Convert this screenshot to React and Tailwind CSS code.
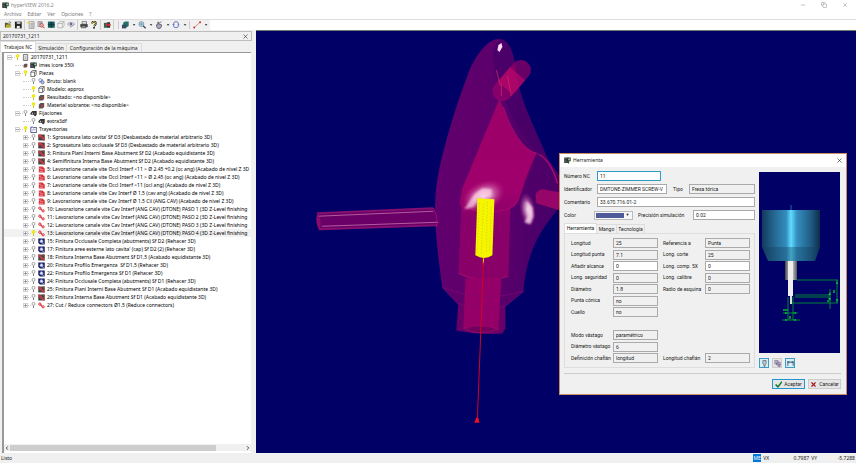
import { ChevronLeft, ChevronRight, Copy, Minus, X } from 'lucide-react'

const glyphs = {
  app: (
    <>
      <rect x="0" y="1" width="8" height="10" fill="#222" />
      <path d="M1 3h5M1 6h4M1 9h6" stroke="#bbb" strokeWidth=".8" />
      <path d="M6 1h6v7H9v4H7z" fill="#1d5038" />
      <path d="M8 3h2v3H8z" fill="#fff" />
    </>
  ),
  open: (
    <>
      <path d="M1 3h4l1 1h4v2H4l-2 5H1z" fill="#5b5420" />
      <path d="M4 6h8l-2 5H2z" fill="#b5ad38" />
      <path d="M7 2q2-2 4 1" stroke="#222" fill="none" />
    </>
  ),
  save: (
    <>
      <rect x="1" y="1" width="11" height="11" fill="#222" />
      <path d="M4 1h6v4H4z" fill="#bbb" />
      <path d="M4 8h5v4H4z" fill="#eee" />
    </>
  ),
  list: (
    <>
      <path d="M3 1h8v11H3z" fill="#eee" stroke="#777" />
      <path d="M5 4h5M5 6h5M5 8h5M5 10h5" stroke="#667" strokeWidth=".8" />
      <path d="M0 1h4v3H0z" fill="#e4d44b" />
    </>
  ),
  find: (
    <>
      <path d="M1 1h7v8H1z" fill="#ddd" stroke="#777" />
      <circle cx="7" cy="7" r="3" fill="#eaa" stroke="#a33" />
      <path d="M9 9l3 3" stroke="#a33" strokeWidth="1.5" />
      <path d="M3 3h4M3 5h2" stroke="#555" />
    </>
  ),
  panel: (
    <>
      <rect x="1" y="1" width="11" height="10" fill="#17595b" />
      <path d="M6.500 1v10M1 6h11" stroke="#0c3435" strokeWidth="1.500" />
    </>
  ),
  cubes: <path d="M1 4h7v7H1zM1 4l3-3h7l-3 3M8 11l3-3V1" fill="#f5f5f5" stroke="#999" />,
  view: (
    <>
      <path d="M0 5q6-6 12 0q-6 7-12 0z" fill="#ddd" stroke="#889" />
      <circle cx="6" cy="5" r="2" fill="#669" />
      <path d="M5 11l6-6" stroke="#88a" />
    </>
  ),
  print: (
    <>
      <path d="M3 1h7v4H3z" fill="#eee" stroke="#444" />
      <path d="M0 5h12v5H0z" fill="#444" />
      <path d="M2 8h7v3H2z" fill="#aaa" stroke="#333" />
    </>
  ),
  help: (
    <>
      <path d="M3 4q0-3 3-3t3 3q0 2-3 4" fill="none" stroke="#222" strokeWidth="3" />
      <path d="M3 4q0-3 3-3t3 3q0 2-3 4" fill="none" stroke="#d8cf35" strokeWidth="1.300" />
      <circle cx="6" cy="11" r="1.500" fill="#222" />
    </>
  ),
  exit: (
    <>
      <path d="M1 3h5v8H1z" fill="#24694d" />
      <path d="M6 2h5v9H6z" fill="#333" />
      <path d="M3 6l4-3v6z" fill="#d33" />
      <path d="M8 5h4v3H8z" fill="#d33" />
    </>
  ),
  shade: (
    <>
      <path d="M3 3l3-2h6v7l-3 2H3z" fill="#287064" />
      <path d="M1 6h7v6H1z" fill="#344c66" />
    </>
  ),
  zoom: (
    <>
      <circle cx="5" cy="5" r="4" fill="#c7dae9" stroke="#4c7298" />
      <path d="M5 3v4M3 5h4" stroke="#2a855c" />
      <path d="M8 8l4 4" stroke="#335" strokeWidth="2" />
    </>
  ),
  hand: <path d="M2 6h2V2h2v3l4 1v3l-2 3H4L2 9zM7 3l3-2" fill="#aab" stroke="#334" />,
  rotate: (
    <>
      <path d="M2 5q0-4 4-4t4 4M10 7q0 4-4 4T2 7" fill="none" stroke="#6272c8" strokeWidth="1.500" />
      <path d="M0 5h4l-2 3zM8 7h4l-2-3z" fill="#6272c8" />
    </>
  ),
  measure: (
    <>
      <path d="M1 11L11 2" stroke="#d65050" />
      <circle cx="1.500" cy="10.500" r="1.500" fill="#c22" />
      <circle cx="11" cy="2" r="1.500" fill="#c22" />
    </>
  ),
  doc: (
    <>
      <path d="M2 1h8v11H2z" fill="#fff" stroke="#444" strokeWidth="1.300" />
      <path d="M4 4h4M4 6h4M4 8h4M4 10h4" stroke="#555" strokeWidth=".8" />
    </>
  ),
  cube: <path d="M1 4h7v8H1zM1 4l3-3h7l-3 3M8 12l3-3V1" fill="#fff" stroke="#333" strokeWidth="1.200" />,
  blank: (
    <>
      <circle cx="4" cy="4" r="3" fill="#dde4fa" stroke="#5160a0" />
      <circle cx="8" cy="8" r="3" fill="#b6c2ed" stroke="#33427d" />
      <path d="M2 9l7-7" stroke="#5160a0" />
    </>
  ),
  missing: (
    <>
      <path d="M1 5l3-3h7v7l-3 3H1z" fill="#555" />
      <path d="M4 5l6 5M10 5l-6 5" stroke="#c9393c" strokeWidth="1.600" />
    </>
  ),
  fixture: (
    <>
      <path d="M0 6l4-4h8v7l-3 3-3-3H1z" fill="#333" />
      <path d="M3 5h2v3H3zM8 5h1v3H8z" fill="#ccc" />
    </>
  ),
  paths: (
    <>
      <path d="M1 2h4l1 1h6v9H1z" fill="#fff" stroke="#2d376e" strokeWidth="1.500" />
      <path d="M4 9l2-4 2 3 2-2" stroke="#4f62b1" fill="none" />
    </>
  ),
  rough: (
    <>
      <path d="M0 1h12v11H0z" fill="#444" />
      <path d="M0 1h6v3h3v3h3v5H9V9H6V6H0z" fill="#d43945" />
    </>
  ),
  finish: (
    <>
      <path d="M0 1h12v11H0z" fill="#454545" />
      <path d="M0 1h3l9 9v2H9L0 4z" fill="#c23c42" />
      <path d="M7 1h5v5z" fill="#75595a" />
    </>
  ),
  level: (
    <>
      <path d="M1 1h7l4 4v7H1z" fill="#d92c37" />
      <path d="M0 4h6M3 7h7M2 10h7" stroke="#fff" strokeWidth=".8" />
    </>
  ),
  link: (
    <>
      <circle cx="3" cy="4" r="2.200" fill="#fff" stroke="#d9232d" strokeWidth="1.800" />
      <circle cx="9" cy="9" r="2" fill="#fff" stroke="#d9232d" strokeWidth="1.800" />
      <path d="M4 5l3 3" stroke="#d9232d" strokeWidth="2" />
    </>
  ),
  redo: (
    <>
      <path d="M0 1h12v11H3l-3-3z" fill="#171b63" />
      <circle cx="6" cy="6" r="3" fill="#dee7ff" stroke="#7786bb" />
      <path d="M7 9l4 2" stroke="#fff" />
    </>
  ),
  tool: <path d="M3 1h6v6L7 9v3H5V9L3 7z" fill="#b8c9d2" stroke="#344" />,
  layers: <path d="M1 1h6v6H1zM4 4h7v5H4zM7 8h4v4H7z" fill="#c8bde5" stroke="#615476" />,
  span: <path d="M1 2v9M11 2v9M1 4h10M3 2v4M9 2v4" stroke="#23465c" strokeWidth="1.400" fill="none" />
}

const Glyph = ({ name, className = 'size-[6px]' }) => (
  <svg viewBox="0 0 12 13" className={`shrink-0 ${className}`} aria-hidden="true">
    {glyphs[name]}
  </svg>
)

const Bulb = ({ on }) => (
  <svg viewBox="0 0 6 8" className="h-[6px] w-[5px] shrink-0" aria-hidden="true">
    <circle cx="3" cy="2.500" r="2" fill={on ? '#f2ed13' : '#fff'} stroke={on ? '#e4de12' : '#777'} strokeWidth=".9" />
    <path d="M3 5v3" stroke={on ? '#c2ba1b' : '#777'} strokeWidth="1.300" />
  </svg>
)

const toolGroups = [
  ['open', 'save'],
  ['list', 'find', 'panel', 'cubes', 'view'],
  ['print', 'help'],
  ['exit']
]

const menuTools = ['shade', 'zoom', 'hand', 'rotate']

// depth, icon, label, bulb state (null hides it), expander
const tree = [
  [0, 'doc', '20170731_1211', true, '-'],
  [1, 'app', 'imes icore 350i', null, ''],
  [1, 'cube', 'Piezas', true, '-'],
  [2, 'blank', 'Bruto: blank', false, ''],
  [2, 'cube', 'Modelo: approx', true, ''],
  [2, 'missing', 'Resultado: <no disponible>', true, ''],
  [2, 'missing', 'Material sobrante: <no disponible>', true, ''],
  [1, 'fixture', 'Fijaciones', false, '-'],
  [2, 'fixture', 'extra3df', false, ''],
  [1, 'paths', 'Trayectorias', true, '-'],
  [2, 'rough', "1: Sgrossatura lato cavita' Sf D3 (Desbastado de material arbitrario 3D)", false, '+'],
  [2, 'rough', '2: Sgrossatura lato occlusale Sf D3 (Desbastado de material arbitrario 3D)', false, '+'],
  [2, 'finish', '3: Finitura Piani Interni Base Abutment Sf D2 (Acabado equidistante 3D)', false, '+'],
  [2, 'finish', '4: Semifinitura Interna Base Abutment Sf D2 (Acabado equidistante 3D)', false, '+'],
  [2, 'level', '5: Lavorazione canale vite Occl Interf <11 > Ø 2.45 +0.2 (oc ang) (Acabado de nivel Z 3D', false, '+'],
  [2, 'level', '6: Lavorazione canale vite Occl Interf <11 > Ø 2.45 (oc ang) (Acabado de nivel Z 3D)', false, '+'],
  [2, 'level', '7: Lavorazione canale vite Occl Interf <11 (ocl ang) (Acabado de nivel Z 3D)', false, '+'],
  [2, 'level', '8: Lavorazione canale vite Cav Interf Ø 1.5 (cav ang) (Acabado de nivel Z 3D)', false, '+'],
  [2, 'level', '9: Lavorazione canale vite Cav Interf Ø 1.5 Cil (ANG CAV) (Acabado de nivel Z 3D)', false, '+'],
  [2, 'link', '10: Lavorazione canale vite Cav Interf (ANG CAV) (DTONE) PASO 1 (3D Z-Level finishing', false, '+'],
  [2, 'link', '11: Lavorazione canale vite Cav Interf (ANG CAV) (DTONE) PASO 2 (3D Z-Level finishing', false, '+'],
  [2, 'link', '12: Lavorazione canale vite Cav Interf (ANG CAV) (DTONE) PASO 3 (3D Z-Level finishing', false, '+'],
  [2, 'link', '13: Lavorazione canale vite Cav Interf (ANG CAV) (DTONE) PASO 4 (3D Z-Level finishing', true, '+'],
  [2, 'redo', '15: Finitura Occlusale Completa (abutments) Sf D2 (Rehacer 3D)', false, '+'],
  [2, 'redo', "17: Finitura aree esterne lato cavita' (cap) Sf D2 (2) (Rehacer 3D)", false, '+'],
  [2, 'finish', '18: Finitura Interna Base Abutment Sf D1.5 (Acabado equidistante 3D)', false, '+'],
  [2, 'redo', '20: Finitura Profilo Emergenza  Sf D1.5 (Rehacer 3D)', false, '+'],
  [2, 'redo', '22: Finitura Profilo Emergenza Sf D1 (Rehacer 3D)', false, '+'],
  [2, 'redo', '24: Finitura Occlusale Completa (abutments) Sf D1 (Rehacer 3D)', false, '+'],
  [2, 'finish', '25: Finitura Piani Interni Base Abutment Sf D1 (Acabado equidistante 3D)', false, '+'],
  [2, 'finish', '26: Finitura Interna Base Abutment Sf D1 (Acabado equidistante 3D)', false, '+'],
  [2, 'link', '27: Cut / Reduce connectors Ø1.5 (Reduce connectors)', false, '+']
]

const depthPad = ['pl-[3px]', 'pl-[11px]', 'pl-[19px]']

const TreeRow = ({ row }) => {
  const [depth, icon, label, bulb, expander] = row
  const selected = label.startsWith('13:')
  return (
    <li className={`flex h-[8px] items-center whitespace-pre ${depthPad[depth]} ${selected ? 'bg-[#f2f2f2]' : ''}`}>
      <span className="flex w-[8px] shrink-0 items-center">
        {expander && (
          <svg viewBox="0 0 5 5" className="size-[5px] shrink-0" aria-hidden="true">
            <path d="M.5.5h4v4h-4z" fill="#fff" stroke="#bbb" strokeWidth=".7" />
            <path d={expander === '+' ? 'M1 2.500h3M2.500 1v3' : 'M1 2.500h3'} stroke="#668" strokeWidth=".6" />
          </svg>
        )}
        <span className="grow border-t border-dotted border-[#ccc]" />
      </span>
      {bulb === null ? <Glyph name="missing" className="size-[5px]" /> : <Bulb on={bulb} />}
      <Glyph name={icon} className="ml-[2px] size-[7px]" />
      <span className="ml-[2px]">{label}</span>
    </li>
  )
}

const SidePanel = () => (
  <aside className="flex w-[252px] shrink-0 flex-col">
    <div className="mt-[1px] flex h-[10px] items-center justify-between border border-[#bdbdbd] px-[2px] text-[5px]">
      <span>20170731_1211</span>
      <button type="button" aria-label="Cerrar panel"><X className="size-[7px]" strokeWidth={2} /></button>
    </div>
    <div role="tablist" className="flex h-[11px] items-end text-[5px]">
      <button type="button" role="tab" aria-selected="true" className="h-[11px] border-x border-t border-[#ddd] bg-white px-[3px]">Trabajos NC</button>
      <button type="button" role="tab" aria-selected="false" className="h-[9px] border-r border-t border-[#ddd] px-[2px]">Simulación</button>
      <button type="button" role="tab" aria-selected="false" className="h-[9px] border-r border-t border-[#ddd] px-[3px]">Configuración de la máquina</button>
    </div>
    <div className="ml-[2px] mr-[1px] flex min-h-0 flex-1 flex-col border-l-2 border-t border-[#999] bg-white">
      <ul className="min-h-0 flex-1 overflow-hidden text-[5px] text-black">
        {tree.map((row) => (
          <TreeRow key={row[2]} row={row} />
        ))}
      </ul>
      <div className="mb-[2px] flex h-[7px] items-center bg-[#f0f0f0]">
        <ChevronLeft className="size-[6px] shrink-0" strokeWidth={3} />
        <div className="h-[6px] w-5/6 bg-[#cdcdcd]" />
        <ChevronRight className="ml-auto size-[6px] shrink-0" strokeWidth={3} />
      </div>
    </div>
  </aside>
)

const Scene = () => (
  <svg viewBox="257 31 599 422" preserveAspectRatio="xMinYMin meet" className="block w-full" aria-label="Vista 3D">
    <defs>
      <linearGradient id="shell" x1="0" x2="1">
        <stop offset="0" stopColor="#62006e" />
        <stop offset=".45" stopColor="#5c006b" />
        <stop offset="1" stopColor="#430068" />
      </linearGradient>
      <linearGradient id="core" x1="0" y1="0" x2="0" y2="1">
        <stop offset="0" stopColor="#9b0068" />
        <stop offset=".5" stopColor="#a0006c" />
        <stop offset=".65" stopColor="#8a006a" />
        <stop offset="1" stopColor="#880068" />
      </linearGradient>
      <radialGradient id="shine">
        <stop offset="0" stopColor="#fff" />
        <stop offset=".4" stopColor="#f3b6d8" stopOpacity=".8" />
        <stop offset="1" stopColor="#c02484" stopOpacity="0" />
      </radialGradient>
      <filter id="soft" x="-50%" y="-50%" width="200%" height="200%">
        <feGaussianBlur stdDeviation="1" />
      </filter>
    </defs>
    <path d="M500 39C488 38 474 58 468 76C458 102 445 143 439 174C433 203 436 238 443 287L458 303Q485 311 507 305L524 291C526 263 534 238 556 212L565 196V183L548 158C533 122 518 96 516 65C513 49 508 39 500 39Z" fill="url(#shell)" />
    <path d="M500 39C508 39 513 49 516 65C518 96 533 122 548 158C535 153 520 132 508 106L496 75L493 52Z" fill="#460068" opacity=".8" />
    <path d="M500 99L463 188L460 204L462 206L459 273Q470 280 484 280L509 276L511 208Q517 207 520 198L537 153C522 149 510 127 504 108Z" fill="url(#core)" />
    <path d="M462 206Q486 216 511 208L520 198" fill="none" stroke="#b80d70" strokeWidth=".6" />
    <path d="M459 273Q484 284 509 276" fill="none" stroke="#b41270" strokeWidth=".7" />
    <path d="M459 303L457 330Q480 335 503 333L506 328V305Q484 311 459 303Z" fill="#690068" />
    <path d="M466 278L464 328Q482 323 499 329L502 277Z" fill="#940068" />
    <path d="M464 328Q482 322 499 329Q480 336 464 328Z" fill="#72005e" stroke="#a80e68" strokeWidth=".6" />
    <path d="M443 287Q484 303 524 291M443 287L458 303Q486 311 507 305L524 291" fill="none" stroke="#850b71" strokeWidth=".6" />
    <path d="M537 153Q524 179 520 202Q530 190 556 208L565 193V183L548 158Z" fill="#500068" opacity=".7" />
    <path d="M504 107C511 128 523 150 537 153Q551 159 558 183Q553 163 541 154" fill="none" stroke="#bb0e70" strokeWidth=".8" />
    <g transform="rotate(-49 511 82)">
      <rect x="489" y="72" width="48" height="20" rx="10" fill="#a00068" opacity=".65" />
      <path d="M503 72h19v20h-19z" fill="#d40968" opacity=".5" />
    </g>
    <path d="M497 70L501 86M508 76L512 96M502 84V96" stroke="#d9256f" strokeWidth=".7" />
    <path d="M318 213L435 208L439 225L320 230Q316 222 318 213Z" fill="#6a0067" />
    <path d="M318 213L434 208M320 229L438 225" stroke="#840f70" strokeWidth="2" />
    <path d="M318 216L434 211M323 226L439 222" stroke="#b45aa0" strokeWidth="1" />
    <path d="M318 213Q324 222 320 230Q316 222 318 213Z" fill="#8c0c6c" />
    <path d="M434 208Q439 216 437 226" fill="none" stroke="#ae176f" strokeWidth=".7" />
    <path d="M536 194Q540 187 548 190L566 193V212L537 203Z" fill="#a90869" opacity=".8" />
    <ellipse cx="484" cy="196" rx="23" ry="15" fill="url(#shine)" opacity=".85" transform="rotate(-25 484 196)" />
    <path d="M465 209L470 201L475 194L483 188L492 189L492 196L479 198L474 207Z" fill="#ffd1e8" opacity=".7" filter="url(#soft)" />
    <ellipse cx="528" cy="209" rx="8" ry="17" fill="url(#shine)" opacity=".75" transform="rotate(-8 528 209)" />
    <path d="M527 201L533 207L534 216L531 224L525 222L528 216Z" fill="#ffdcef" opacity=".8" filter="url(#soft)" />
    <path d="M499 45L502 43L503 47L500 52L498 50Z" fill="#ffd6f4" />
    <path d="M478 198L495 199L493 255Q485 260 476 255Z" fill="#f6f500" />
    <path d="M480 203L478 252M484 204L482 254M488 202L487 251M492 207L490 250" stroke="#b1a11b" strokeWidth=".5" strokeDasharray="1 2" />
    <path d="M484 257V264" stroke="#ed0" />
    <path d="M484 262L481 342L478 418" fill="none" stroke="#d50024" strokeWidth="1" />
    <path d="M477 417L479 417L480 422H475Z" fill="#f01020" />
  </svg>
)

const fieldBox = 'h-[10px] min-w-0 border border-[#aaa] px-[2px] leading-none outline-none'

const Field = ({ id, label, value, white }) => (
  <div className="flex items-center">
    <label htmlFor={id} className="w-[42px] shrink-0 whitespace-nowrap">{label}</label>
    <input id={id} defaultValue={value} readOnly={!white} className={`${fieldBox} w-[45px] ${white ? 'bg-white' : 'bg-[#f0f0f0]'}`} />
  </div>
)

const params = [
  [['Longitud', '25'], ['Referencia a', 'Punta']],
  [['Longitud punta', '7.1'], ['Long. corte', '25']],
  [['Añadir alcance', '0', true], ['Long. comp. 5X', '0', true]],
  [['Long. seguridad', '0'], ['Long. calibre', '0']],
  [['Diámetro', '1.8'], ['Radio de esquina', '0']],
  [['Punta cónica', 'no']],
  [['Cuello', 'no']],
  [],
  [['Modo vástago', 'paramétrico']],
  [['Diámetro vástago', '6']],
  [['Definición chaflán', 'longitud'], ['Longitud chaflán', '2']]
]

const ToolPreview = () => (
  <svg viewBox="0 0 81 181" className="h-[181px] w-full bg-[#000066]" aria-label="Vista de la herramienta">
    <defs>
      <linearGradient id="holder">
        <stop offset="0" stopColor="#143a5c" />
        <stop offset=".2" stopColor="#24658f" />
        <stop offset=".42" stopColor="#348dbd" />
        <stop offset=".5" stopColor="#5fdcff" />
        <stop offset=".6" stopColor="#3590c0" />
        <stop offset=".85" stopColor="#1f5a82" />
        <stop offset="1" stopColor="#0e2c48" />
      </linearGradient>
      <linearGradient id="shank">
        <stop offset="0" stopColor="#444" />
        <stop offset=".5" stopColor="#eee" />
        <stop offset="1" stopColor="#555" />
      </linearGradient>
    </defs>
    <path d="M32 33v5" stroke="#33b0cf" strokeWidth=".6" />
    <path d="M3 38h58v37l-5 14H9L3 75z" fill="url(#holder)" />
    <path d="M3 75h58l-5 14H9z" fill="#123b5d" opacity=".35" />
    <path d="M26 89h12v19H26z" fill="url(#shank)" />
    <path d="M29 89h5v35h-5z" fill="#eee" />
    <path d="M31 124h2v8h-2z" fill="#ddd" />
    <path d="M38 108h41M78 108v23M36 123h35M36 125h35M33 131h46M71 117v20M29 125v23M34 125v23M24 141h15M23 148h18" fill="none" stroke="#00a32b" strokeWidth=".8" />
    <path d="M77 112l1-4 1 4zM77 127l1 4 1-4zM69 123l2-3 1 3zM69 126l2 3 1-3zM26 140l3 1-3 1zM37 140l-3 1 3 1zM26 147l3 1-3 1zM37 147l-3 1 3 1z" fill="#00c62f" />
    <path d="M24 138h5M31 144v3M75 118v3M68 129h2" stroke="#00b62f" strokeWidth="1.500" />
  </svg>
)

const ToolDialog = () => (
  <section role="dialog" aria-label="Herramienta" className="absolute right-[9px] top-[122px] flex w-[288px] flex-col border border-[#c98d62] bg-[#f0f0f0] font-['Roboto',sans-serif] text-[5px]">
    <header className="flex h-[13px] items-center bg-white pl-[4px] pr-[3px]">
      <Glyph name="app" className="size-[7px]" />
      <h2 className="ml-[2px] font-['Noto_Sans',sans-serif]">Herramienta</h2>
      <button type="button" aria-label="Cerrar" className="ml-auto"><X className="size-[7px]" strokeWidth={2} /></button>
    </header>
    <div className="flex gap-[4px] pl-[4px] pr-[6px] pt-[4px]">
      <form className="flex min-w-0 flex-1 flex-col">
        <div className="flex flex-col gap-[3px]">
          <div className="flex items-center">
            <label htmlFor="numero" className="w-[33px] shrink-0">Número NC</label>
            <input id="numero" defaultValue="11" className="h-[10px] w-[64px] border border-[#2d9bc6] bg-white px-[2px] leading-none outline-none" />
          </div>
          <div className="flex items-center">
            <label htmlFor="ident" className="w-[33px] shrink-0">Identificador</label>
            <input id="ident" defaultValue="DMTONE-ZIMMER SCREW-V" className={`${fieldBox} w-[70px] bg-white`} />
            <label htmlFor="tipo" className="ml-[6px] w-[16px] shrink-0">Tipo</label>
            <input id="tipo" readOnly defaultValue="Fresa tórica" className={`${fieldBox} flex-1 bg-[#f0f0f0]`} />
          </div>
          <div className="flex items-center">
            <label htmlFor="comentario" className="w-[33px] shrink-0">Comentario</label>
            <input id="comentario" defaultValue="33.670.716.01-2" className={`${fieldBox} flex-1 bg-white`} />
          </div>
          <div className="flex items-center">
            <span className="w-[30px] shrink-0">Color</span>
            <button type="button" aria-label="Color" className="flex h-[9px] w-[39px] items-center border border-[#bbb] bg-[#f7f7f7] p-[1px]">
              <span className="h-full flex-1 bg-[#505c9a]" />
              <span className="w-[7px] text-[4px] leading-none">▼</span>
            </button>
            <label htmlFor="precision" className="ml-[5px] w-[55px] shrink-0">Precisión simulación</label>
            <input id="precision" defaultValue="0.02" className={`${fieldBox} flex-1 bg-white`} />
          </div>
        </div>
        <div role="tablist" className="mt-[3px] flex h-[10px] items-end">
          <button type="button" role="tab" aria-selected="true" className="h-[10px] w-[33px] border-x border-t border-[#ddd] bg-white">Herramienta</button>
          <button type="button" role="tab" aria-selected="false" className="h-[9px] w-[20px] border-r border-t border-[#ddd]">Mango</button>
          <button type="button" role="tab" aria-selected="false" className="h-[9px] w-[28px] border-r border-t border-[#ddd]">Tecnología</button>
        </div>
        <div className="flex h-[135px] flex-col justify-between border border-[#ddd] py-[4px] pl-[6px] pr-[4px]">
          {params.map((pair, i) => (
            <div key={i} className="flex h-[10px] justify-between">
              {pair.map(([label, value, white]) => (
                <Field key={label} id={label} label={label} value={value} white={white} />
              ))}
            </div>
          ))}
        </div>
      </form>
      <div className="w-[81px] shrink-0 pt-px">
        <ToolPreview />
        <div className="mt-[5px] flex gap-[3px]">
          <button type="button" aria-label="Herramienta" className="flex size-[10px] items-center justify-center border border-[#3c9cc4] bg-[#d7edf7]"><Glyph name="tool" className="size-[7px]" /></button>
          <button type="button" aria-label="Capas" className="flex size-[10px] items-center justify-center border border-[#ccc] bg-[#e5e5e5]"><Glyph name="layers" className="size-[7px]" /></button>
          <button type="button" aria-label="Cotas" className="flex size-[10px] items-center justify-center border border-[#3c9cc4] bg-[#d7edf7]"><Glyph name="span" className="size-[7px]" /></button>
        </div>
      </div>
    </div>
    <footer className="ml-[4px] mr-[5px] mt-[5px] flex justify-end gap-[3px] border-t border-[#ccc] pb-[5px] pt-[5px]">
      <button type="button" className="flex h-[10px] w-[33px] items-center justify-center gap-[2px] border border-[#2496cf] bg-[#e5e5e5]">
        <svg viewBox="0 0 12 12" className="size-[7px]" aria-hidden="true"><path d="M1 6l4 4 7-9" fill="none" stroke="#08762f" strokeWidth="2.500" /></svg>
        Aceptar
      </button>
      <button type="button" className="flex h-[10px] w-[33px] items-center justify-center gap-[2px] border border-[#ccc] bg-[#e5e5e5]">
        <X className="size-[7px] text-[#ab1721]" strokeWidth={4} />
        Cancelar
      </button>
    </footer>
  </section>
)

const App = () => (
  <div className="flex h-screen flex-col bg-white pb-[4px] pr-[9px] font-['Noto_Sans',sans-serif] leading-none text-[#222]">
    <header className="flex h-[10px] shrink-0 items-center pl-[2px] text-[5px] text-[#888]">
      <Glyph name="app" className="size-[7px]" />
      <h1 className="ml-[2px]">hyperVIEW 2016.2</h1>
      <div className="ml-auto flex items-center gap-[15px] pr-[8px]">
        <button type="button" aria-label="Minimizar"><Minus className="size-[6px]" /></button>
        <button type="button" aria-label="Restaurar"><Copy className="size-[6px]" /></button>
        <button type="button" aria-label="Cerrar"><X className="size-[6px]" /></button>
      </div>
    </header>
    <nav className="flex h-[10px] shrink-0 items-center gap-[6px] border-b border-[#ddd] pl-[4px] text-[5px] text-[#777]">
      <button type="button">Archivo</button>
      <button type="button">Editar</button>
      <button type="button">Ver</button>
      <button type="button">Opciones</button>
      <button type="button">?</button>
    </nav>
    <div className="flex h-[10px] shrink-0">
      <div className="flex items-center bg-[#f0f0f0] px-[2px]">
        {toolGroups.map((group, i) => (
          <div key={i} className="flex items-center gap-[2px] border-r border-[#ccc] px-[2px] py-px">
            {group.map((name) => (
              <button key={name} type="button" aria-label={name}><Glyph name={name} className="size-[8px]" /></button>
            ))}
          </div>
        ))}
        <div className="ml-[4px] flex items-center gap-[2px] border-x border-[#ccc] px-[2px]">
          {menuTools.map((name) => (
            <button key={name} type="button" aria-label={name} className="flex items-center gap-[3px]">
              <Glyph name={name} className="size-[8px]" />
              <span className="w-[4px] text-[4px]">▾</span>
            </button>
          ))}
        </div>
        <button type="button" aria-label="medir" className="ml-[3px] flex items-center gap-[3px]">
          <Glyph name="measure" className="size-[8px]" />
          <span className="w-[4px] text-[4px]">▾</span>
        </button>
      </div>
    </div>
    <main className="flex min-h-0 flex-1 bg-[#f0f0f0]">
      <SidePanel />
      <div className="relative ml-[4px] min-w-0 flex-1 overflow-hidden border-t border-[#6b7a6b] bg-[#000066]">
        <Scene />
        <ToolDialog />
      </div>
    </main>
    <footer className="flex h-[10px] shrink-0 items-center bg-[#f0f0f0] pl-[1px] pr-[1px] text-[5px]">
      <span>Listo</span>
      <span className="ml-auto flex h-[8px] w-[8px] items-center justify-center bg-[#0078d7] text-white">ME</span>
      <span className="ml-[2px] w-[8px]">VX</span>
      <span className="w-[38px] text-right">0.7987</span>
      <span className="ml-[2px]">VY</span>
      <span className="w-[38px] text-right">-5.7288</span>
    </footer>
  </div>
)

export default App
